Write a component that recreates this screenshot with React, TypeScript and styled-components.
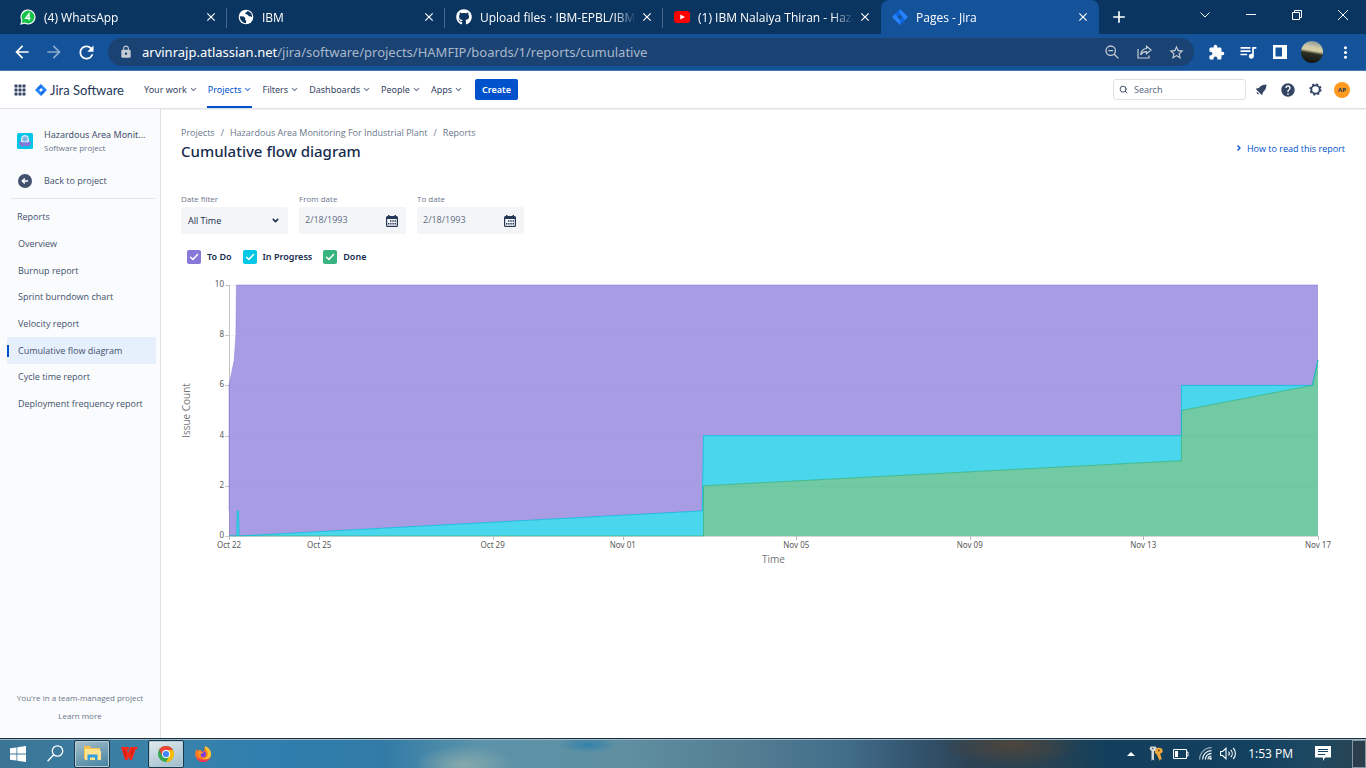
import React, { useEffect, useRef, useState } from "react";
import styled, { createGlobalStyle, css } from "styled-components";
import {
  MdArrowBack, MdArrowForward, MdRefresh, MdLock, MdExtension, MdQueueMusic,
  MdMoreVert, MdStarBorder, MdAdd, MdClose, MdHelp,
} from "react-icons/md";
import { FaGithub } from "react-icons/fa";
import { ChevronDown, Search } from "lucide-react";

const Global = createGlobalStyle`
  *, *::before, *::after { box-sizing: border-box; }
  body { margin: 0; font-family: "Open Sans", "Noto Sans", sans-serif; color: #172b4d; background: #fff; }
  button, input, select { font: inherit; color: inherit; margin: 0; }
  button { border: 0; background: none; padding: 0; }
  a { color: inherit; text-decoration: none; }
  h1, h2, p, ul, ol { margin: 0; padding: 0; font-weight: inherit; }
  ul, ol { list-style: none; }
  svg { display: block; flex: none; }
`;

const wide = css`font-family: "Noto Sans", "Open Sans", sans-serif;`;

const Desktop = styled.div`
  display: flex;
  flex-direction: column;
  min-height: 100vh;
`;

/* ---------- browser ---------- */

const TabStrip = styled.div`
  display: flex;
  height: 34px;
  padding-left: 9px;
  background: #0b3561;
  color: #fff;
`;

const Tab = styled.div<{ $active?: boolean; $line?: boolean }>`
  position: relative;
  flex: 0 1 218px;
  min-width: 0;
  display: flex;
  align-items: center;
  padding: 0 9px 0 11px;
  font-size: 12px;
  ${(p) => p.$active && css`background: #14529a; border-radius: 8px 8px 0 0;`}
  ${(p) => p.$line && css`
    &::after { content: ""; position: absolute; right: 0; top: 8px; height: 20px; width: 1px; background: #4a6a8d; }
  `}
`;

const TabTitle = styled.a`
  flex: 1;
  min-width: 0;
  margin: 0 4px 0 8px;
  overflow: hidden;
  white-space: nowrap;
  mask-image: linear-gradient(90deg, #000 86%, transparent);
`;

const IconButton = styled.button<{ $w?: number; $dim?: boolean }>`
  display: grid;
  place-items: center;
  flex: none;
  width: ${(p) => p.$w ?? 16}px;
  opacity: ${(p) => (p.$dim ? 0.5 : 1)};
`;

const WindowButtons = styled.div`
  display: flex;
  margin-left: auto;
  height: 29px;
`;

const Toolbar = styled.div`
  display: flex;
  align-items: center;
  height: 37px;
  padding: 0 10px 0 6px;
  background: #14529a;
  border-bottom: 1px solid #4576ae;
  color: #fff;
`;

const Omnibox = styled.div`
  flex: 1;
  min-width: 0;
  display: flex;
  align-items: center;
  height: 28px;
  margin: 0 6px;
  padding: 0 2px 0 11px;
  border-radius: 14px;
  background: #1a4373;
  color: #c6ccd3;
`;

const Address = styled.p`
  ${wide}
  flex: 1;
  min-width: 0;
  overflow: hidden;
  white-space: nowrap;
  margin-left: 9px;
  font-size: 13px;
  line-height: 20px;
  color: #a9b8ca;
  b { font-weight: 400; color: #fff; }
`;

const Photo = styled.button`
  width: 22px;
  height: 22px;
  margin: 0 11px 0 5px;
  border-radius: 50%;
  background: linear-gradient(190deg, #6e8494 0%, #cfc9a6 30%, #d6cfa4 44%, #2c2f22 56%, #0c0f0d 100%);
`;

/* ---------- Jira header ---------- */

const Header = styled.header`
  ${wide}
  display: flex;
  align-items: center;
  height: 38px;
  padding: 0 16px 0 14px;
  border-bottom: 1px solid #dfe1e6;
  box-shadow: 0 1px 0 #f0f1f4;
  color: #344563;
`;

const Brand = styled.a`
  display: flex;
  align-items: center;
  gap: 3px;
  margin: 0 19px 0 9px;
  font-family: Lato, sans-serif;
  font-size: 13px;
  color: #253858;
`;

const NavButton = styled.button<{ $active?: boolean }>`
  display: flex;
  align-items: center;
  gap: 2px;
  height: 37px;
  margin: 0 9px 0 0;
  padding: 0 0 0 1px;
  font-size: 9px;
  color: ${(p) => (p.$active ? "#0052cc" : "#344563")};
  box-shadow: ${(p) => (p.$active ? "inset 0 -2px #0052cc" : "none")};
  svg { opacity: 0.7; }
`;

const CreateButton = styled.button`
  height: 21px;
  margin-left: 3px;
  padding: 0 7px;
  border-radius: 2px;
  background: #0052cc;
  color: #fff;
  font-size: 9px;
  font-weight: 600;
`;

const SearchBox = styled.label`
  display: flex;
  align-items: center;
  gap: 6px;
  width: 133px;
  height: 21px;
  margin-left: auto;
  padding: 0 5px;
  border: 1px solid #dfe1e6;
  border-radius: 3px;
  input {
    flex: 1; min-width: 0; padding: 0; border: 0; outline: 0; background: none; font-size: 9px;
    &::placeholder { color: #5e6c84; opacity: 1; }
  }
`;

const HeaderIcons = styled.div`
  display: flex;
  align-items: center;
  gap: 11px;
  margin-left: 7px;
`;

const Avatar = styled.button`
  width: 16px;
  height: 16px;
  border-radius: 50%;
  background: #ff991f;
  color: #253858;
  font-size: 6px;
  font-weight: 700;
`;

/* ---------- sidebar ---------- */

const Body = styled.div`
  flex: 1;
  display: flex;
`;

const Sidebar = styled.nav`
  flex: none;
  display: flex;
  flex-direction: column;
  width: 161px;
  padding: 19px 4px 13px 7px;
  border-right: 1px solid #dfe1e6;
  background: #fafbfc;
  color: #42526e;
  font-size: 9px;
`;

const Project = styled.a`
  display: flex;
  align-items: center;
  gap: 11px;
  padding: 0 3px 0 10px;
  div { min-width: 0; }
`;

const ProjectName = styled.p`
  ${wide}
  white-space: nowrap;
  line-height: 14px;
`;

const ProjectType = styled.p`
  font-size: 8px;
  line-height: 12px;
  color: #6b778c;
`;

const BackLink = styled.a`
  display: flex;
  align-items: center;
  gap: 12px;
  height: 27px;
  margin-top: 13px;
  padding: 0 11px;
`;

const Rule = styled.hr`
  width: 144px;
  margin: 4px 0 4px 4px;
  border: 0;
  border-top: 1px solid #e4e6ea;
`;

const MenuTitle = styled.h2`
  padding: 0 10px;
  font-size: 9px;
  line-height: 27px;
`;

const Menu = styled.ul`
  display: grid;
  grid-auto-rows: 1fr;
  height: 187px;
`;

const MenuLink = styled.a<{ $active?: boolean }>`
  position: relative;
  display: flex;
  align-items: center;
  width: 149px;
  height: 100%;
  padding: 0 11px;
  border-radius: 2px;
  background: ${(p) => (p.$active ? "#e6effc" : "none")};
  ${(p) => p.$active && css`
    &::before { content: ""; position: absolute; left: 0; top: 8px; width: 2px; height: 12px; background: #0052cc; }
  `}
`;

const SideFooter = styled.div`
  margin: auto 3px 0 0;
  text-align: center;
  font-size: 8px;
  line-height: 18px;
  color: #6b778c;
  a { font-weight: 500; }
`;

/* ---------- report ---------- */

const Main = styled.main`
  flex: 1;
  min-width: 0;
  padding: 15px 21px 0 20px;
`;

const Crumbs = styled.ol`
  display: flex;
  font-size: 9px;
  line-height: 18px;
  color: #6b778c;
  li + li::before { content: "/"; margin: 0 6px; }
`;

const TitleRow = styled.div`
  display: flex;
  justify-content: space-between;
  align-items: center;
  height: 18px;
`;

const Title = styled.h1`
  ${wide}
  font-size: 15px;
  line-height: 18px;
  font-weight: 500;
`;

const HelpButton = styled.button`
  display: flex;
  align-items: center;
  gap: 4px;
  margin-top: -6px;
  font-size: 9px;
  color: #0052cc;
`;

const Filters = styled.div`
  display: flex;
  gap: 11px;
  margin-top: 33px;
`;

const Field = styled.div`
  width: 107px;
  label { display: block; font-size: 8px; line-height: 12px; color: #6b778c; font-weight: 500; }
`;

const Control = styled.div`
  position: relative;
  display: flex;
  align-items: center;
  height: 27px;
  margin-top: 2px;
  border-radius: 2px;
  background: #f4f5f7;
  select, input {
    width: 100%; height: 100%; padding: 0 7px; border: 0; outline: 0; background: none;
    appearance: none; font-size: 9px;
  }
  input { color: #5e6c84; padding: 0 6px 2px; }
  svg { position: absolute; right: 8px; pointer-events: none; }
`;

const Legend = styled.div`
  ${wide}
  display: flex;
  gap: 11px;
  margin: 14px 0 0 6px;
`;

const LegendItem = styled.label<{ $color: string }>`
  display: flex;
  align-items: center;
  gap: 6px;
  font-size: 9px;
  line-height: 18px;
  font-weight: 600;
  input {
    appearance: none;
    width: 14px;
    height: 14px;
    margin: 0;
    border-radius: 2px;
    background: ${(p) => p.$color};
  }
  input:checked {
    background: ${(p) => p.$color} url("data:image/svg+xml,%3Csvg xmlns='http://www.w3.org/2000/svg' viewBox='0 0 14 14' fill='none' stroke='white' stroke-width='1.5' stroke-linecap='round' stroke-linejoin='round'%3E%3Cpath d='M3.5 7.2l2.4 2.3 4.6-5'/%3E%3C/svg%3E") center / 14px;
  }
`;

const ChartBox = styled.div`
  ${wide}
  margin-top: 10px;
  svg { width: 100%; height: 292px; }
  text { font-size: 8px; fill: #5a5a5a; }
  .axis { font-family: "Open Sans", sans-serif; font-size: 10px; fill: #757575; }
`;

/* Dates are day numbers counted from the first of October. */
type Point = [number, number];
const START = 22.92;
const END = 48.03;
const todo: Point[] = [[22.92, 1], [22.92, 6], [23.04, 7], [23.08, 8], [23.09, 10], [48.03, 10]];
const progress: Point[] = [[22.92, 0], [23.1, 0], [23.11, 1], [23.14, 1], [23.15, 0], [33.83, 1], [33.86, 4], [44.88, 4], [44.88, 6], [47.9, 6], [48.03, 7]];
const done: Point[] = [[22.92, 0], [33.86, 0], [33.86, 2], [44.88, 3], [44.88, 5], [47.9, 6], [48.03, 7]];
const ticks: [number, string][] = [
  [22.92, "Oct 22"], [25, "Oct 25"], [29, "Oct 29"], [32, "Nov 01"],
  [36, "Nov 05"], [40, "Nov 09"], [44, "Nov 13"], [48.03, "Nov 17"],
];

function FlowChart() {
  const box = useRef<HTMLDivElement>(null);
  const [width, setWidth] = useState(1164);
  useEffect(() => {
    const watcher = new ResizeObserver(([entry]) => setWidth(entry.contentRect.width));
    if (box.current) watcher.observe(box.current);
    return () => watcher.disconnect();
  }, []);

  const left = 48;
  const right = width - 27;
  const base = 260;
  const top = 9;
  const x = (d: number) => left + ((d - START) / (END - START)) * (right - left);
  const y = (v: number) => base - (v / 10) * (base - top);
  const line = (pts: Point[]) => pts.map(([d, v]) => `${x(d).toFixed(1)},${y(v).toFixed(1)}`).join(" L");
  const area = (upper: Point[], lower: Point[]) => `M${line(upper)} L${line([...lower].reverse())} Z`;
  const floor: Point[] = [[START, 0], [END, 0]];

  return (
    <ChartBox ref={box}>
      <svg role="img" aria-label="Cumulative flow diagram">
        {[0, 2, 4, 6, 8, 10].map((v) => (
          <g key={v}>
            <path d={`M${left} ${Math.round(y(v)) + 0.5}H${right}`} stroke="#f2f2f2" />
            <path d={`M${left - 4} ${Math.round(y(v)) + 0.5}h4`} stroke="#c4c4c4" />
            <text x={left - 5} y={y(v) + 2} textAnchor="end">{v}</text>
          </g>
        ))}
        <path d={`M${left + 0.5} ${top}V${base}`} stroke="#c4c4c4" />
        <path d={area(todo, progress)} fill="#8777d9" fillOpacity="0.72" />
        <path d={area(progress, done)} fill="#00c7e6" fillOpacity="0.71" />
        <path d={area(done, floor)} fill="#36b37e" fillOpacity="0.7" />
        <path d={`M${line(todo)}`} fill="none" stroke="#8777d9" strokeOpacity="0.5" />
        <path d={`M${line(done)}`} fill="none" stroke="#36b37e" strokeOpacity="0.8" />
        <path d={`M${line(progress)}`} fill="none" stroke="#00b8d9" strokeOpacity="0.75" />
        <path d={`M${left} ${base + 0.5}H${right}`} stroke="#c4c4c4" strokeOpacity="0.6" />
        {ticks.map(([d, label]) => (
          <g key={label}>
            <path d={`M${Math.round(x(d)) + 0.5} ${base}v4`} stroke="#bbb" />
            <text x={x(d)} y={base + 12} textAnchor="middle">{label}</text>
          </g>
        ))}
        <text className="axis" x={(left + right) / 2} y={base + 27} textAnchor="middle">Time</text>
        <text className="axis" transform={`translate(9 ${(base + top) / 2}) rotate(-90)`} textAnchor="middle">Issue Count</text>
      </svg>
    </ChartBox>
  );
}

/* ---------- taskbar ---------- */

const Taskbar = styled.footer`
  display: flex;
  align-items: center;
  height: 30px;
  border-top: 1px solid #1b2f40;
  box-shadow: inset 0 1px #9fb9c6;
  background:
    radial-gradient(ellipse 50px 20px at 34% 90%, #86aaac 0%, transparent 100%),
    radial-gradient(ellipse 30px 8px at 43% 20%, #3482ab 0%, transparent 100%),
    radial-gradient(ellipse 70px 22px at 74% 20%, #4d453c 0%, transparent 100%),
    linear-gradient(90deg, #3b7494 0%, #3a83ab 12%, #2f7eae 20%, #327ba6 28%, #5b93aa 35%, #5f8fa0 46%, #557f93 54%, #426d8a 62%, #33546e 67%, #2b4355 71%, #2a4250 76%, #133f5c 81%, #12405f 92%, #1f4962 96%, #27424f 100%);
  color: #fff;
`;

const TaskButton = styled.button<{ $w?: number; $open?: boolean; $front?: boolean }>`
  display: grid;
  place-items: center;
  width: ${(p) => p.$w ?? 38}px;
  height: 28px;
  ${(p) => p.$open && css`
    border: 1px solid #16384d;
    border-radius: 2px;
    box-shadow: inset 0 0 0 1px #b5cbd5;
    background: linear-gradient(160deg, ${p.$front ? "#e2eaee, #9ebccb" : "#a9c1cc, #41809f"});
  `}
`;

const Tray = styled.div`
  display: flex;
  align-items: center;
  margin-left: auto;
  height: 100%;
`;

const Clock = styled.time`
  margin: 0 22px 0 9px;
  font-size: 12px;
`;

const ShowDesktop = styled.button`
  width: 14px;
  height: 28px;
  margin-left: 21px;
  border: 1px solid #8397a2;
  background: #2a3f4b;
`;

/* ---------- drawings ---------- */

const JiraMark = ({ size }: { size: number }) => (
  <svg width={size} height={size} viewBox="0 0 16 16">
    <path d="M8 0l8 8-8 8-8-8z" fill="#2684ff" />
    <path d="M8 5.3L10.7 8 8 10.7 5.3 8z" fill="#fff" />
    <path d="M8 0v5.3L5.3 8 3 5z" fill="#0052cc" opacity=".45" />
    <path d="M8 16v-5.3L10.7 8 13 11z" fill="#0052cc" opacity=".45" />
  </svg>
);

const JiraTabMark = () => (
  <svg width="16" height="16" viewBox="0 0 16 16">
    <path d="M8 0l8 8-8 8-8-8z" fill="#2684ff" />
    <path d="M8 5.3L10.7 8 8 10.7 5.3 8z" fill="#14529a" />
    <path d="M8 0v5.300L5.300 8 3 5z" fill="#0052cc" opacity=".6" />
    <path d="M8 16v-5.300L10.700 8 13 11z" fill="#0052cc" opacity=".6" />
  </svg>
);

const WhatsAppIcon = () => (
  <svg width="16" height="16" viewBox="0 0 17 17">
    <path d="M1 16l1-4a7.400 7.400 0 1 1 3 3z" fill="#17c24c" stroke="#fff" strokeWidth="1.200" />
    <path d="M9.600 12V5L6 9.800h5" fill="none" stroke="#fff" strokeWidth="1.400" />
  </svg>
);

const GlobeIcon = () => (
  <svg width="16" height="16" viewBox="0 0 16 16">
    <circle cx="8" cy="8" r="7.300" fill="#fff" />
    <path d="M1.800 7.200l4 .4 1.600 1.600-.4 1.600 1.200 1-.2 2.400C4.600 13.600 2 11.400 1.800 7.200zM9.400 2c-.2 1.600-2.200 1.200-2.200 2.600 0 1.400 2.400.4 3 2 .6 1.200 2 .6 3.800 1.600C14.400 5 12.200 2.600 9.400 2z" fill="#0b3561" />
  </svg>
);

const YouTubeIcon = () => (
  <svg width="16" height="12" viewBox="0 0 16 12">
    <rect width="16" height="12" rx="3" fill="#f00" />
    <path d="M6.300 3.400L11 6l-4.700 2.600z" fill="#fff" />
  </svg>
);

const AppsIcon = () => (
  <svg width="12" height="12" viewBox="0 0 12 12" fill="#344563">
    {[0, 4, 8].map((r) => [0, 4, 8].map((c) => <rect key={`${r}${c}`} x={c + 0.5} y={r + 0.5} width="3" height="3" rx=".6" />))}
  </svg>
);

const ProjectIcon = () => (
  <svg width="16" height="16" viewBox="0 0 16 16">
    <rect width="16" height="16" rx="1.500" fill="#00c7e6" />
    <path d="M4 9.500V6.500a4 4.500 0 0 1 8 0v3z" fill="#dfe8fb" />
    <circle cx="8" cy="6" r="2.200" fill="#8fdcf0" stroke="#6f8fd6" strokeWidth=".8" />
    <circle cx="8" cy="6" r=".8" fill="#5b6fc4" />
    <path d="M2 10c0-1.400 1.400-1.800 2.200-1 2.400 1 5.200 1 7.600 0 .8-.8 2.200-.4 2.200 1 0 1.500-1.200 2.500-2.400 2.800V14h-1.400v-1H5.800v1H4.400v-1.200C3.200 12.500 2 11.500 2 10z" fill="#8777d9" />
  </svg>
);

const BackIcon = () => (
  <svg width="14" height="14" viewBox="0 0 14 14">
    <circle cx="7" cy="7" r="7" fill="#42526e" />
    <path d="M10 7H4.500M6.800 4.600L4.400 7l2.400 2.400" stroke="#fff" strokeWidth="1.500" fill="none" />
  </svg>
);

const CalendarIcon = () => (
  <svg width="12" height="12" viewBox="0 0 12 12">
    <path d="M1.500 1H2V0h1.500v1h5V0H10v1h.5A1.500 1.500 0 0 1 12 2.500v8a1.500 1.500 0 0 1-1.500 1.500h-9A1.500 1.500 0 0 1 0 10.500v-8A1.500 1.500 0 0 1 1.500 1z" fill="#253858" />
    <rect x="1.200" y="4" width="9.600" height="6.800" fill="#f4f5f7" />
    <path d="M4 5.200h1.400v1.500H4zM6.300 5.200h1.400v1.500H6.300zM8.600 5.200H10v1.500H8.600zM2 8h1.400v1.500H2zM4.200 8h1.400v1.500H4.200zM6.400 8h1.400v1.500H6.400zM8.600 8H10v1.500H8.600z" fill="#253858" />
  </svg>
);

const BellIcon = () => (
  <svg width="12" height="12" viewBox="0 0 12 12">
    <path d="M11.500.5C9 .6 6.600 1.200 5.200 2.600L3.800 4 .6 4.800 7 11.300l1-3.100 1.400-1.400C10.800 5.400 11.400 3 11.500.5z" fill="#344563" />
    <path d="M1.900 7.800a1.700 1.700 0 0 0 2.300 2.300z" fill="#344563" />
  </svg>
);

const GearIcon = () => (
  <svg width="13" height="13" viewBox="0 0 13 13" fill="none" stroke="#344563">
    <circle cx="6.500" cy="6.500" r="4.200" strokeWidth="1.800" />
    <circle cx="6.500" cy="6.500" r="5.300" strokeWidth="1.600" strokeDasharray="2.080 2.080" />
  </svg>
);

const ZoomOutIcon = () => (
  <svg width="14" height="14" viewBox="0 0 14 14" fill="none" stroke="currentColor" strokeWidth="1.300">
    <circle cx="5.700" cy="5.700" r="4.700" />
    <path d="M9.200 9.200l4.200 4.200M3.400 5.700H8" />
  </svg>
);

const ShareIcon = () => (
  <svg width="15" height="14" viewBox="0 0 15 14" fill="none" stroke="currentColor" strokeWidth="1.200">
    <path d="M1 4v9h11v-2.500" />
    <path d="M9.500 1.200L14.200 5 9.500 8.800V6.700C6.500 6.700 4.800 8 3.600 9.800 4 6.400 6 3.800 9.500 3.500z" />
  </svg>
);

const PanelIcon = () => (
  <svg width="14" height="14" viewBox="0 0 14 14">
    <path d="M0 0h14v14H0zM2.500 2.500v9H9v-9z" fill="#fff" fillRule="evenodd" />
  </svg>
);

const WindowsIcon = () => (
  <svg width="16" height="16" viewBox="0 0 16 16" fill="#fff">
    <path d="M0 2.300L6.500 1.400v6.200H0zM7.300 1.300L16 0v7.600H7.300zM0 8.400h6.500v6.200L0 13.700zM7.300 8.400H16V16l-8.700-1.300z" />
  </svg>
);

const TaskSearchIcon = () => (
  <svg width="17" height="17" viewBox="0 0 17 17" fill="none" stroke="#fff" strokeWidth="1.300">
    <circle cx="10.500" cy="6" r="5.200" />
    <path d="M6.700 9.800L.6 16.300" />
  </svg>
);

const FolderIcon = () => (
  <svg width="17" height="15" viewBox="0 0 17 15">
    <path d="M0 0h6l1 2h9v11H0z" fill="#f5c34c" />
    <path d="M1 3h15v2h1v9H1z" fill="#ffe38f" />
    <path d="M3.500 14V8.500h10V14H11v-2.500H6V14z" fill="#2f9fe0" />
  </svg>
);

const WpsIcon = () => (
  <svg width="17" height="13" viewBox="0 0 17 13" fill="#f8281a">
    <path d="M0 0h7.500l1 2.500H6.200L7 6.300 9.500 0h7L16 2.500h-1.500L11 13H8.800L8 9.500 6.500 13H4z" />
    <path d="M3 2.500l1.800 7M9.800 8.500L12 2.600" stroke="#a51208" strokeWidth=".9" fill="none" />
  </svg>
);

const ChromeIcon = () => (
  <svg width="16" height="16" viewBox="0 0 16 16">
    <circle cx="8" cy="8" r="8" fill="#34a853" />
    <path d="M8 8L1.070 4A8 8 0 0 1 14.930 4z" fill="#ea4335" />
    <path d="M8 4h6.930A8 8 0 0 1 8 16l3.460-6z" fill="#fbbc05" />
    <path d="M1.070 4L4.540 10 8 8z" fill="#ea4335" />
    <circle cx="8" cy="8" r="4" fill="#fff" />
    <circle cx="8" cy="8" r="3.100" fill="#4285f4" />
  </svg>
);

const FirefoxIcon = () => (
  <svg width="16" height="16" viewBox="0 0 16 16">
    <path d="M10 0c3.500 1.500 6 4.500 6 8.200A7.900 7.900 0 0 1 .2 8.200C.2 6 1 4 1.800 3L2.600 5 5 3.500 6.500 5 9 5z" fill="#ff7a1f" />
    <path d="M10 0c-.5 2.600 1.500 3.500 2.200 5.500C14 10 11 12.500 8 12.500c3 2.500 8 0 8-4.300C16 4.500 13.500 1.500 10 0z" fill="#ffc933" />
    <path d="M1 10.500C2 14 5 16 8 16.100c3.500 0 6-2 7-4.400-3 2.600-10 3-14-1.200z" fill="#f0325a" />
    <circle cx="8" cy="8.300" r="3" fill="#7b3fe0" />
    <path d="M3.500 5.600c2-.8 3 .6 5 .6-.5 1-2 1-2.600 1.800-.5.800-.6 2.200.8 3C4 11 3 8 3.500 5.600z" fill="#ff9a26" />
  </svg>
);

const KeysIcon = () => (
  <svg width="14" height="16" viewBox="0 0 14 16">
    <path d="M1.500.5h5L8 2.500 6.500 5H5v9.500l-1.500-1L2.500 15V5L.5 3z" fill="#d5d8da" />
    <path d="M6 4l3-2.500 4 1 .8 3.500-2.600 1.800 1.600 5.400-1.500.3-.5 1.500-3-6.500L6 7z" fill="#f0a83c" />
    <circle cx="9.800" cy="4.500" r="1.100" fill="#6b4c14" />
    <circle cx="3.800" cy="2.500" r=".8" fill="#555" />
  </svg>
);

const BatteryIcon = () => (
  <svg width="16" height="10" viewBox="0 0 16 10">
    <path d="M.5.5h13v9H.5zM13.500 3H15v4h-1.500" fill="none" stroke="#fff" />
    <path d="M2 2h3v6H2z" fill="#fff" />
  </svg>
);

const WifiIcon = () => (
  <svg width="13" height="13" viewBox="0 0 13 13" fill="none" stroke="#fff" strokeWidth="1.100">
    <path d="M.6 12.500A11.900 11.900 0 0 1 12.500.6" opacity=".6" />
    <path d="M3.600 12.500a8.900 8.900 0 0 1 8.900-8.900M6.400 12.500a6.100 6.100 0 0 1 6.100-6.100M9 12.500A3.500 3.500 0 0 1 12.500 9" />
    <circle cx="11.500" cy="11.500" r="1.200" fill="#fff" stroke="none" />
  </svg>
);

const SoundIcon = () => (
  <svg width="17" height="13" viewBox="0 0 17 13" fill="none" stroke="#fff" strokeWidth="1.100">
    <path d="M.6 4.500h2L6 1.300v10.400L2.600 8.500h-2zM8.500 4.500a3 3 0 0 1 0 4M10.800 2.800a5.500 5.500 0 0 1 0 7.400M13.200 1a8 8 0 0 1 0 11" />
  </svg>
);

const NoteIcon = () => (
  <svg width="16" height="15" viewBox="0 0 16 15">
    <path d="M0 0h16v11.500h-6L8 15v-3.500H0z" fill="#fff" />
    <path d="M3 3.500h10M3 5.500h10M3 8.500h7" stroke="#12405f" />
  </svg>
);

const tabs = [
  { title: "(4) WhatsApp", icon: <WhatsAppIcon />, line: true },
  { title: "IBM", icon: <GlobeIcon />, line: true },
  { title: "Upload files · IBM-EPBL/IBM-", icon: <FaGithub size={16} />, line: true },
  { title: "(1) IBM Nalaiya Thiran - Haza", icon: <YouTubeIcon /> },
  { title: "Pages - Jira", icon: <JiraTabMark />, active: true },
];

const reports = [
  "Overview", "Burnup report", "Sprint burndown chart", "Velocity report",
  "Cumulative flow diagram", "Cycle time report", "Deployment frequency report",
];

export default function App() {
  return (
    <Desktop>
      <Global />
      <TabStrip>
        {tabs.map((t) => (
          <Tab key={t.title} $active={t.active} $line={t.line}>
            {t.icon}
            <TabTitle href="#">{t.title}</TabTitle>
            <IconButton $w={14} aria-label="Close tab"><MdClose size={14} /></IconButton>
          </Tab>
        ))}
        <IconButton $w={40} aria-label="New tab"><MdAdd size={20} /></IconButton>
        <WindowButtons>
          <IconButton $w={46} aria-label="Search tabs">
            <svg width="10" height="6" viewBox="0 0 10 6" fill="none" stroke="#fff"><path d="M.5.500L5 5 9.500.500" /></svg>
          </IconButton>
          <IconButton $w={46} aria-label="Minimize">
            <svg width="10" height="1" viewBox="0 0 10 1"><path d="M0 0h10v1H0z" fill="#fff" /></svg>
          </IconButton>
          <IconButton $w={46} aria-label="Restore">
            <svg width="10" height="10" viewBox="0 0 10 10" fill="none" stroke="#fff"><path d="M.5 2.500h7v7h-7zM2.500 2.500v-2h7v7h-2" /></svg>
          </IconButton>
          <IconButton $w={46} aria-label="Close window">
            <svg width="10" height="10" viewBox="0 0 10 10" stroke="#fff"><path d="M0 0l10 10M10 0L0 10" /></svg>
          </IconButton>
        </WindowButtons>
      </TabStrip>
      <Toolbar>
        <IconButton $w={32} aria-label="Back"><MdArrowBack size={20} /></IconButton>
        <IconButton $w={32} $dim aria-label="Forward"><MdArrowForward size={20} /></IconButton>
        <IconButton $w={32} aria-label="Reload"><MdRefresh size={21} /></IconButton>
        <Omnibox>
          <MdLock size={14} />
          <Address><b>arvinrajp.atlassian.net</b>/jira/software/projects/HAMFIP/boards/1/reports/cumulative</Address>
          <IconButton $w={32} aria-label="Zoom"><ZoomOutIcon /></IconButton>
          <IconButton $w={32} aria-label="Share"><ShareIcon /></IconButton>
          <IconButton $w={32} aria-label="Bookmark"><MdStarBorder size={17} /></IconButton>
        </Omnibox>
        <IconButton $w={32} aria-label="Extensions"><MdExtension size={17} /></IconButton>
        <IconButton $w={32} aria-label="Media"><MdQueueMusic size={20} /></IconButton>
        <IconButton $w={32} aria-label="Side panel"><PanelIcon /></IconButton>
        <Photo aria-label="Profile" />
        <IconButton $w={22} aria-label="Menu"><MdMoreVert size={19} /></IconButton>
      </Toolbar>

      <Header>
        <AppsIcon />
        <Brand href="#"><JiraMark size={12} />Jira Software</Brand>
        {["Your work", "Projects", "Filters", "Dashboards", "People", "Apps"].map((n) => (
          <NavButton key={n} $active={n === "Projects"}>{n}<ChevronDown size={9} strokeWidth={3} /></NavButton>
        ))}
        <CreateButton>Create</CreateButton>
        <SearchBox>
          <Search size={9} strokeWidth={2.500} />
          <input placeholder="Search" aria-label="Search" />
        </SearchBox>
        <HeaderIcons>
          <IconButton aria-label="Notifications"><BellIcon /></IconButton>
          <IconButton aria-label="Help"><MdHelp size={16} /></IconButton>
          <IconButton aria-label="Settings"><GearIcon /></IconButton>
          <Avatar aria-label="Account">AP</Avatar>
        </HeaderIcons>
      </Header>

      <Body>
        <Sidebar>
          <Project href="#" title="Hazardous Area Monitoring For Industrial Plant">
            <ProjectIcon />
            <div>
              <ProjectName>Hazardous Area Monit...</ProjectName>
              <ProjectType>Software project</ProjectType>
            </div>
          </Project>
          <BackLink href="#"><BackIcon />Back to project</BackLink>
          <Rule />
          <MenuTitle>Reports</MenuTitle>
          <Menu>
            {reports.map((r) => (
              <li key={r}><MenuLink href="#" $active={r === "Cumulative flow diagram"}>{r}</MenuLink></li>
            ))}
          </Menu>
          <SideFooter>
            <p>You're in a team-managed project</p>
            <a href="#">Learn more</a>
          </SideFooter>
        </Sidebar>

        <Main>
          <Crumbs>
            <li><a href="#">Projects</a></li>
            <li><a href="#">Hazardous Area Monitoring For Industrial Plant</a></li>
            <li><a href="#">Reports</a></li>
          </Crumbs>
          <TitleRow>
            <Title>Cumulative flow diagram</Title>
            <HelpButton>
              <svg width="8" height="8" viewBox="0 0 8 8" fill="none" stroke="currentColor" strokeWidth="1.300"><path d="M2.500 1.500L5 4 2.500 6.500" /></svg>
              How to read this report
            </HelpButton>
          </TitleRow>
          <Filters>
            <Field>
              <label htmlFor="range">Date filter</label>
              <Control>
                <select id="range"><option>All Time</option></select>
                <ChevronDown size={9} strokeWidth={4} />
              </Control>
            </Field>
            <Field>
              <label htmlFor="from">From date</label>
              <Control><input id="from" defaultValue="2/18/1993" /><CalendarIcon /></Control>
            </Field>
            <Field>
              <label htmlFor="to">To date</label>
              <Control><input id="to" defaultValue="2/18/1993" /><CalendarIcon /></Control>
            </Field>
          </Filters>
          <Legend>
            <LegendItem $color="#8777d9"><input type="checkbox" defaultChecked />To Do</LegendItem>
            <LegendItem $color="#00c7e6"><input type="checkbox" defaultChecked />In Progress</LegendItem>
            <LegendItem $color="#36b37e"><input type="checkbox" defaultChecked />Done</LegendItem>
          </Legend>
          <FlowChart />
        </Main>
      </Body>

      <Taskbar>
        <TaskButton $w={36} aria-label="Start"><WindowsIcon /></TaskButton>
        <TaskButton aria-label="Search"><TaskSearchIcon /></TaskButton>
        <TaskButton $w={36} $open aria-label="File Explorer"><FolderIcon /></TaskButton>
        <TaskButton aria-label="WPS Office"><WpsIcon /></TaskButton>
        <TaskButton $w={36} $open $front aria-label="Chrome"><ChromeIcon /></TaskButton>
        <TaskButton aria-label="Firefox"><FirefoxIcon /></TaskButton>
        <Tray>
          <IconButton $w={24} aria-label="Hidden icons">
            <svg width="8" height="4" viewBox="0 0 8 4"><path d="M4 0l4 4H0z" fill="#fff" /></svg>
          </IconButton>
          <IconButton $w={25} aria-label="Keys"><KeysIcon /></IconButton>
          <IconButton $w={25} aria-label="Battery"><BatteryIcon /></IconButton>
          <IconButton $w={24} aria-label="Network"><WifiIcon /></IconButton>
          <IconButton $w={22} aria-label="Volume"><SoundIcon /></IconButton>
          <Clock>1:53 PM</Clock>
          <IconButton aria-label="Action center"><NoteIcon /></IconButton>
          <ShowDesktop aria-label="Show desktop" />
        </Tray>
      </Taskbar>
    </Desktop>
  );
}
